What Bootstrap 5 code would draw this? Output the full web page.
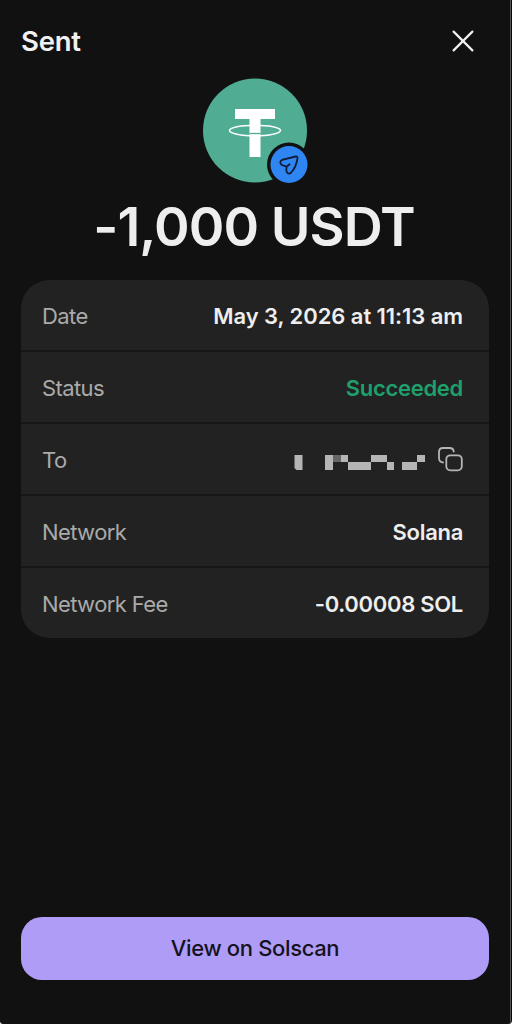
<!DOCTYPE html>
<html lang="en" data-bs-theme="dark">
<head>
<meta charset="utf-8">
<meta name="viewport" content="width=device-width, initial-scale=1">
<title>Sent</title>
<link rel="stylesheet" href="https://cdn.jsdelivr.net/npm/bootstrap@5.3.0/dist/css/bootstrap.min.css">
<style>
body{background:#fff;font-family:Inter,"Liberation Sans",sans-serif;color:#eee}
.edge{width:512px;height:1024px;background:#111;border-right:1px solid #080808;border-radius:0 0 4px 3px;overflow:hidden}
.sheet{height:1024px;border-right:1px solid #555;padding:0 21px 44px 21px}
.topbar{height:78px;padding:0 14px 0 0}
.title{font-size:27.5px;line-height:30px;font-weight:580;letter-spacing:-.2px;margin-top:26px;color:#f1f1f1}
.close-btn{margin-top:29px;width:24px;height:24px}
.token{width:106px;height:106px}
.amount{font-size:54px;line-height:64px;font-weight:570;letter-spacing:-.95px;margin:11px 2px 0 0;white-space:nowrap;color:#eee}
.details{margin-top:21px;border-radius:28px;overflow:hidden;gap:2px;background:#161616}
.details .list-group-item{height:70px;padding:2px 26px 0 21px;border:0;background:#222;font-size:22px;line-height:28px}
.details dt{font-weight:400;letter-spacing:-.6px;color:#aaa}
.details dd{margin:0;font-weight:570;letter-spacing:-.3px;color:#eee;white-space:nowrap}
.details dd.when{letter-spacing:-.06px}
.details dd.ok{color:#1f9f6b}
.cta{height:63px;border-radius:21px;background:#ae9cf6;color:#151221;font-size:22px;font-weight:550;letter-spacing:-.35px;border:0}
</style>
</head>
<body>
<div class="edge">
<main class="sheet d-flex flex-column">
  <header class="topbar d-flex justify-content-between align-items-start">
    <h1 class="title mb-0"><span>Sent</span></h1>
    <svg class="close-btn" viewBox="0 0 24 24" fill="none" stroke="#f0f0f0" stroke-width="2.2" stroke-linecap="round" role="img" aria-label="Close"><path d="M2.6 2.6 21.4 21.4M21.4 2.6 2.6 21.4"/></svg>
  </header>
  <section class="d-flex flex-column align-items-center">
    <svg class="token" viewBox="0 0 106 106" role="img" aria-label="USDT">
      <circle cx="53" cy="52.5" r="52" fill="#50ad94"/>
      <path fill="#fff" d="M33 31h40v10H58.500v38H47.500V41H33z"/>
      <path d="M47.500 55.500h11" stroke="#50ad94" stroke-width="1.300"/>
      <ellipse cx="53" cy="52.500" rx="25.500" ry="5.200" fill="none" stroke="#fff" stroke-width="1.500"/>
      <circle cx="87" cy="86.500" r="22" fill="#111"/>
      <circle cx="87" cy="86.500" r="18.500" fill="#2f86f2"/>
      <path d="M93.800 78.500 80.800 81.600Q76.300 83.600 79.800 87L84.700 88.600 84.200 92.600Q85.700 97.500 89.200 94.500Q94 89.500 95.500 80.500Q95.700 78.100 93.800 78.500ZM84.700 88.600 87.600 86.200" fill="none" stroke="#121c35" stroke-width="1.800" stroke-linecap="round" stroke-linejoin="round"/>
    </svg>
    <h2 class="amount mb-0"><span>-1,000 USDT</span></h2>
  </section>
  <dl class="details list-group mb-0">
    <div class="list-group-item d-flex justify-content-between align-items-center"><dt><span>Date</span></dt><dd class="when"><span>May 3, 2026 at 11:13 am</span></dd></div>
    <div class="list-group-item d-flex justify-content-between align-items-center"><dt><span>Status</span></dt><dd class="ok"><span>Succeeded</span></dd></div>
    <div class="list-group-item d-flex justify-content-between align-items-center"><dt><span>To</span></dt>
      <dd class="d-flex">
        <svg width="170" height="30" viewBox="293 445 170 30" role="img" aria-label="Address hidden, copy">
          <path fill="#b5b5b5" d="M294.500 455h8v15h-6l-2-2zM325 455h8v15h-8zM341 455h7v7h-7zM348 462h23v8h-23zM371 455h16v7h-16zM387 462h7v8h-7zM402 462h15v8h-15zM417 455h8v7h-8z"/>
          <path fill="#666" d="M333 455h8v7h-8z"/>
          <g fill="none" stroke="#b5b5b5" stroke-width="1.800" stroke-linecap="round"><rect x="446.300" y="455.300" width="15.500" height="15" rx="4"/><path d="M443 462.500Q439 462 439 458V452Q439 448 443 448H449.500Q453.500 448 453.700 451.500"/></g>
        </svg>
      </dd></div>
    <div class="list-group-item d-flex justify-content-between align-items-center"><dt><span>Network</span></dt><dd><span>Solana</span></dd></div>
    <div class="list-group-item d-flex justify-content-between align-items-center"><dt><span>Network Fee</span></dt><dd><span>-0.00008 SOL</span></dd></div>
  </dl>
  <button class="cta btn mt-auto w-100" type="button"><span>View on Solscan</span></button>
</main>
</div>
<script src="https://cdn.jsdelivr.net/npm/bootstrap@5.3.0/dist/js/bootstrap.bundle.min.js"></script>
</body>
</html>
